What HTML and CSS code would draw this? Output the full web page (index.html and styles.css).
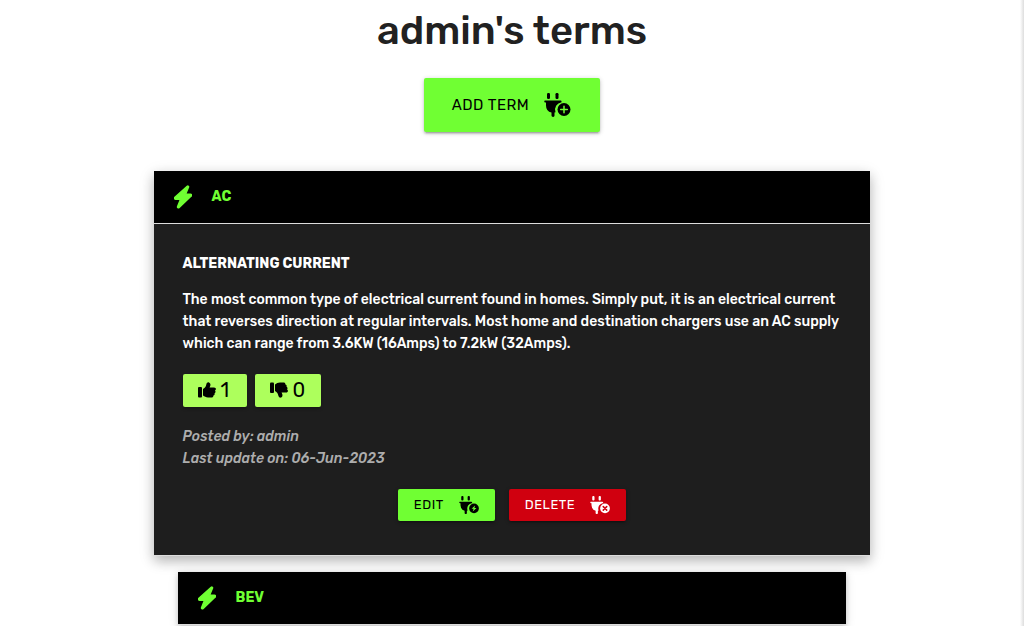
FILE: index.html
```html
<!DOCTYPE html>
<html lang="en">
<head>
<meta charset="utf-8">
<meta name="viewport" content="width=device-width, initial-scale=1">
<title>admin's terms</title>
<link rel="stylesheet" href="styles.css">
</head>
<body>
<svg class="sprite" aria-hidden="true">
  <symbol id="bolt" viewBox="0 0 18 24"><path d="M13.200 1.300c.8-.6 1.700.1 1.300 1L11.600 9.200h4.900c1.100 0 1.500 1.200.7 1.900L5.200 22.400c-.9.8-2 .1-1.600-.9l2.900-7.200H1.600c-1.100 0-1.500-1.300-.7-2z" stroke="currentColor" stroke-width="1.400" stroke-linejoin="round"/></symbol>
  <symbol id="plug" viewBox="0 0 28 24"><rect x="3" y="0" width="3" height="6" rx="1.200"/><rect x="11.500" y="0" width="3" height="6" rx="1.200"/><path d="M1 7.500h15.500c.7 0 1 .4 1 1v.7a7.600 7.600 0 0 0-6 10.100l-1 .3v3c0 .8-.5 1.400-1.400 1.400S7.500 23.400 7.500 22.600v-3A7.500 7.500 0 0 1 2 12.400V9.500H1.200C0 9.500 0 7.500 1 7.500z"/></symbol>
  <symbol id="thumb" viewBox="0 0 18 16"><rect x="0" y="5" width="4" height="10.500" rx="1"/><path d="M5 7c2.200-1.300 3-2.600 3.300-4.500C8.600 1 9.800 0 11 .5c1.300.5 1.700 2 1.300 3.300L11.600 5.500H16c2.200 0 2.500 2.300 1 3 .9 1 .5 2.400-.5 2.800.5 1-.1 2-1.100 2.200.1 1.300-.7 2-2 2H10c-2.300 0-3.300-.9-5-1.900z"/></symbol>
</svg>
<main class="container">
  <h1 class="title">admin's terms</h1>
  <button class="btn btn-large" type="button">Add term
    <svg class="plug-icon" viewBox="0 0 28 24" aria-hidden="true"><use href="#plug"/><circle cx="20" cy="16.500" r="6.500"/><path class="mark thin green" d="M20 13.200v6.600M16.700 16.500h6.600"/></svg>
  </button>
  <ul class="terms">
    <li class="term active">
      <h2 class="term-header"><svg class="bolt" aria-hidden="true"><use href="#bolt"/></svg>AC</h2>
      <div class="term-body">
        <h3 class="name">Alternating Current</h3>
        <p class="text">The most common type of electrical current found in homes. Simply put, it is an electrical current that reverses direction at regular intervals. Most home and destination chargers use an AC supply which can range from 3.6KW (16Amps) to 7.2kW (32Amps).</p>
        <div class="votes">
          <button class="vote" type="button" aria-label="Like, 1"><svg class="thumb" aria-hidden="true"><use href="#thumb"/></svg>1</button>
          <button class="vote" type="button" aria-label="Dislike, 0"><svg class="thumb down" aria-hidden="true"><use href="#thumb"/></svg>0</button>
        </div>
        <p class="meta">Posted by: admin<br>Last update on: 06-Jun-2023</p>
        <div class="actions">
          <button class="btn btn-small" type="button">Edit
            <svg class="plug-icon" viewBox="0 0 28 24" aria-hidden="true"><use href="#plug"/><circle cx="20" cy="16.500" r="6.500"/><path class="green-fill" d="M21.500 12.500L16.800 17h2.700l-1.200 3.700 5-4.700h-2.800z"/></svg>
          </button>
          <button class="btn btn-small danger" type="button">Delete
            <svg class="plug-icon" viewBox="0 0 28 24" aria-hidden="true"><use href="#plug"/><circle cx="20" cy="16.500" r="6.500"/><path class="mark red" d="M17.700 14.200l4.600 4.600M22.300 14.200l-4.600 4.600"/></svg>
          </button>
        </div>
      </div>
    </li>
    <li class="term">
      <h2 class="term-header"><svg class="bolt" aria-hidden="true"><use href="#bolt"/></svg>BEV</h2>
    </li>
  </ul>
</main>
</body>
</html>
```
FILE: styles.css
```css
* { box-sizing: border-box; }
body {
  margin: 0;
  min-height: 100vh;
  background: linear-gradient(to left, #ddd, #fff) right / 4px 100% no-repeat #fff;
  color: #212121;
  font: 500 14px/22px Rubik, Roboto, sans-serif;
}
.sprite { position: absolute; width: 0; height: 0; }
svg { fill: currentColor; flex: none; }
h1, h2, h3, p, ul { margin: 0; padding: 0; }
.container {
  width: 70%;
  margin: 0 auto;
  display: flex;
  flex-direction: column;
  align-items: center;
}
.title { font-size: 40px; line-height: 48px; font-weight: 500; padding-top: 7px; }
.btn {
  display: inline-flex;
  align-items: center;
  border: 0;
  border-radius: 2px;
  background: #70ff33;
  color: #000;
  font-family: inherit;
  font-weight: 400;
  text-transform: uppercase;
  letter-spacing: 0.5px;
  box-shadow: 0 2px 2px rgba(0,0,0,.14), 0 3px 1px -2px rgba(0,0,0,.12), 0 1px 5px rgba(0,0,0,.2);
}
.btn-large { height: 54px; margin-top: 23px; padding: 0 28px; gap: 15px; font-size: 15px; }
.btn-large .plug-icon { width: 28px; height: 24px; }
.btn-small { height: 32px; padding: 0 15px 1px 16px; gap: 15px; font-size: 13px; }
.btn-small .plug-icon { width: 21px; height: 18px; }
.danger { background: #d0000f; color: #fff; }
.mark { fill: none; stroke-width: 2; stroke-linecap: round; }
.thin { stroke-width: 1.5; }
.green { stroke: #70ff33; }
.green-fill { fill: #70ff33; }
.red { stroke: #d0000f; }
.terms { width: 100%; margin-top: 39px; list-style: none; }
.term { margin: 0 24px; box-shadow: 0 2px 5px rgba(0,0,0,.16), 0 2px 10px rgba(0,0,0,.12); }
.term.active { margin: 0 0 16px; box-shadow: 0 5px 11px rgba(0,0,0,.18), 0 4px 15px rgba(0,0,0,.15); }
.term-header {
  display: flex;
  align-items: center;
  gap: 20px;
  min-height: 53px;
  padding: 14px 20px;
  border-bottom: 1px solid #ddd;
  background: #000;
  color: #70ff33;
  font-size: 14px;
  line-height: 22px;
  font-weight: 700;
}
.bolt { width: 18px; height: 24px; }
.term-body { padding: 29px; border-bottom: 1px solid #ddd; background: #1e1e1e; color: #fff; }
.name { font-size: 14px; line-height: 22px; font-weight: 700; text-transform: uppercase; }
.text { margin-top: 14px; }
.votes { display: flex; gap: 8px; margin-top: 19px; }
.vote {
  display: flex;
  align-items: center;
  gap: 5px;
  min-width: 64px;
  height: 33px;
  padding: 0 16px 1px 15px;
  border: 0;
  border-radius: 2px;
  background: #adff5c;
  color: #000;
  font: 400 20px/32px Rubik, Roboto, sans-serif;
  box-shadow: 0 2px 3px rgba(0,0,0,.25);
}
.thumb { width: 18px; height: 16px; }
.down { transform: scaleY(-1); }
.meta { margin-top: 19px; color: #adadad; font-style: italic; }
.actions { display: flex; justify-content: center; gap: 14px; margin: 19px 0 5px; }
```
